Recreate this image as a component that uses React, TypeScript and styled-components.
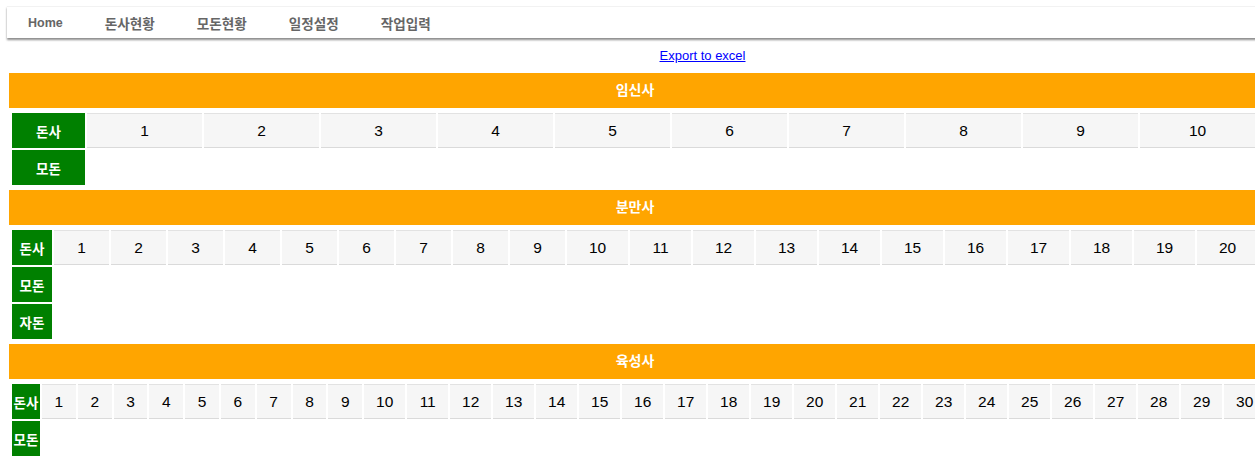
import React from "react";
import styled, { createGlobalStyle } from "styled-components";

interface Section {
  title: string;
  labels: string[];
  count: number;
  labelWidth: number;
  singleWidth: number;
  doubleWidth: number;
}

const sections: Section[] = [
  { title: "임신사", labels: ["돈사", "모돈"], count: 10, labelWidth: 73, singleWidth: 115, doubleWidth: 115 },
  { title: "분만사", labels: ["돈사", "모돈", "자돈"], count: 20, labelWidth: 40, singleWidth: 55, doubleWidth: 61 },
  { title: "육성사", labels: ["돈사", "모돈"], count: 30, labelWidth: 28, singleWidth: 33.8, doubleWidth: 41 },
];

const menu = ["Home", "돈사현황", "모돈현황", "일정설정", "작업입력"];

const GlobalStyle = createGlobalStyle`
  html, body {
    margin: 0;
    padding: 0;
    overflow: hidden;
    background: #fff;
    font-family: "Liberation Sans", "Noto Sans CJK KR", sans-serif;
  }
`;

const Page = styled.div`
  width: 1400px;
  padding-top: 6px;
`;

const Nav = styled.nav`
  display: flex;
  align-items: center;
  margin-left: 7px;
  width: 1260px;
  height: 31px;
  background: #fff;
  border-top: 1px solid #f2f2f2;
  box-shadow: 0 2px 2px rgba(0, 0, 0, 0.45);
`;

const NavItem = styled.a<{ $ko: boolean }>`
  padding: 0 21px;
  font-size: ${(p) => (p.$ko ? "13.6px" : "12.5px")};
  font-weight: bold;
  color: #666;
  text-decoration: none;
  cursor: pointer;
`;

const ExportRow = styled.div`
  margin-left: 8px;
  width: 1389px;
  height: 35px;
  line-height: 34px;
  text-align: center;
`;

const ExportLink = styled.a`
  font-size: 13px;
  color: #00f;
  text-decoration: underline;
  cursor: pointer;
`;

const Header = styled.div`
  margin-left: 9px;
  width: 1252px;
  height: 35px;
  line-height: 35px;
  background: #ffa500;
  color: #fff;
  font-size: 14px;
  font-weight: bold;
  text-align: center;
`;

const Table = styled.table`
  margin: 3px 0 3px 10px;
  border-collapse: separate;
  border-spacing: 2px;
`;

const Label = styled.td<{ $w: number }>`
  width: ${(p) => p.$w}px;
  height: 35px;
  padding: 0;
  background: #008000;
  color: #fff;
  font-size: 13.5px;
  font-weight: bold;
  text-align: center;
  vertical-align: middle;
  white-space: nowrap;
`;

const Cell = styled.td<{ $w: number }>`
  width: ${(p) => p.$w}px;
  height: 33px;
  padding: 0;
  background: #f6f6f6;
  border-top: 1px solid #e2e2e2;
  border-bottom: 1px solid #dadada;
  color: #000;
  font-size: 15.5px;
  text-align: center;
  vertical-align: middle;
`;

const App: React.FC = () => {
  return (
    <Page>
      <GlobalStyle />
      <Nav>
        {menu.map((m) => (
          <NavItem key={m} $ko={m !== "Home"}>
            {m}
          </NavItem>
        ))}
      </Nav>
      <ExportRow>
        <ExportLink>Export to excel</ExportLink>
      </ExportRow>
      {sections.map((s) => (
        <section key={s.title}>
          <Header>{s.title}</Header>
          <Table>
            <tbody>
              {s.labels.map((label, li) => (
                <tr key={label}>
                  <Label $w={s.labelWidth}>{label}</Label>
                  {li === 0 &&
                    Array.from({ length: s.count }, (_, i) => i + 1).map((n) => (
                      <Cell key={n} $w={n < 10 ? s.singleWidth : s.doubleWidth}>
                        {n}
                      </Cell>
                    ))}
                </tr>
              ))}
            </tbody>
          </Table>
        </section>
      ))}
    </Page>
  );
};

export default App;
